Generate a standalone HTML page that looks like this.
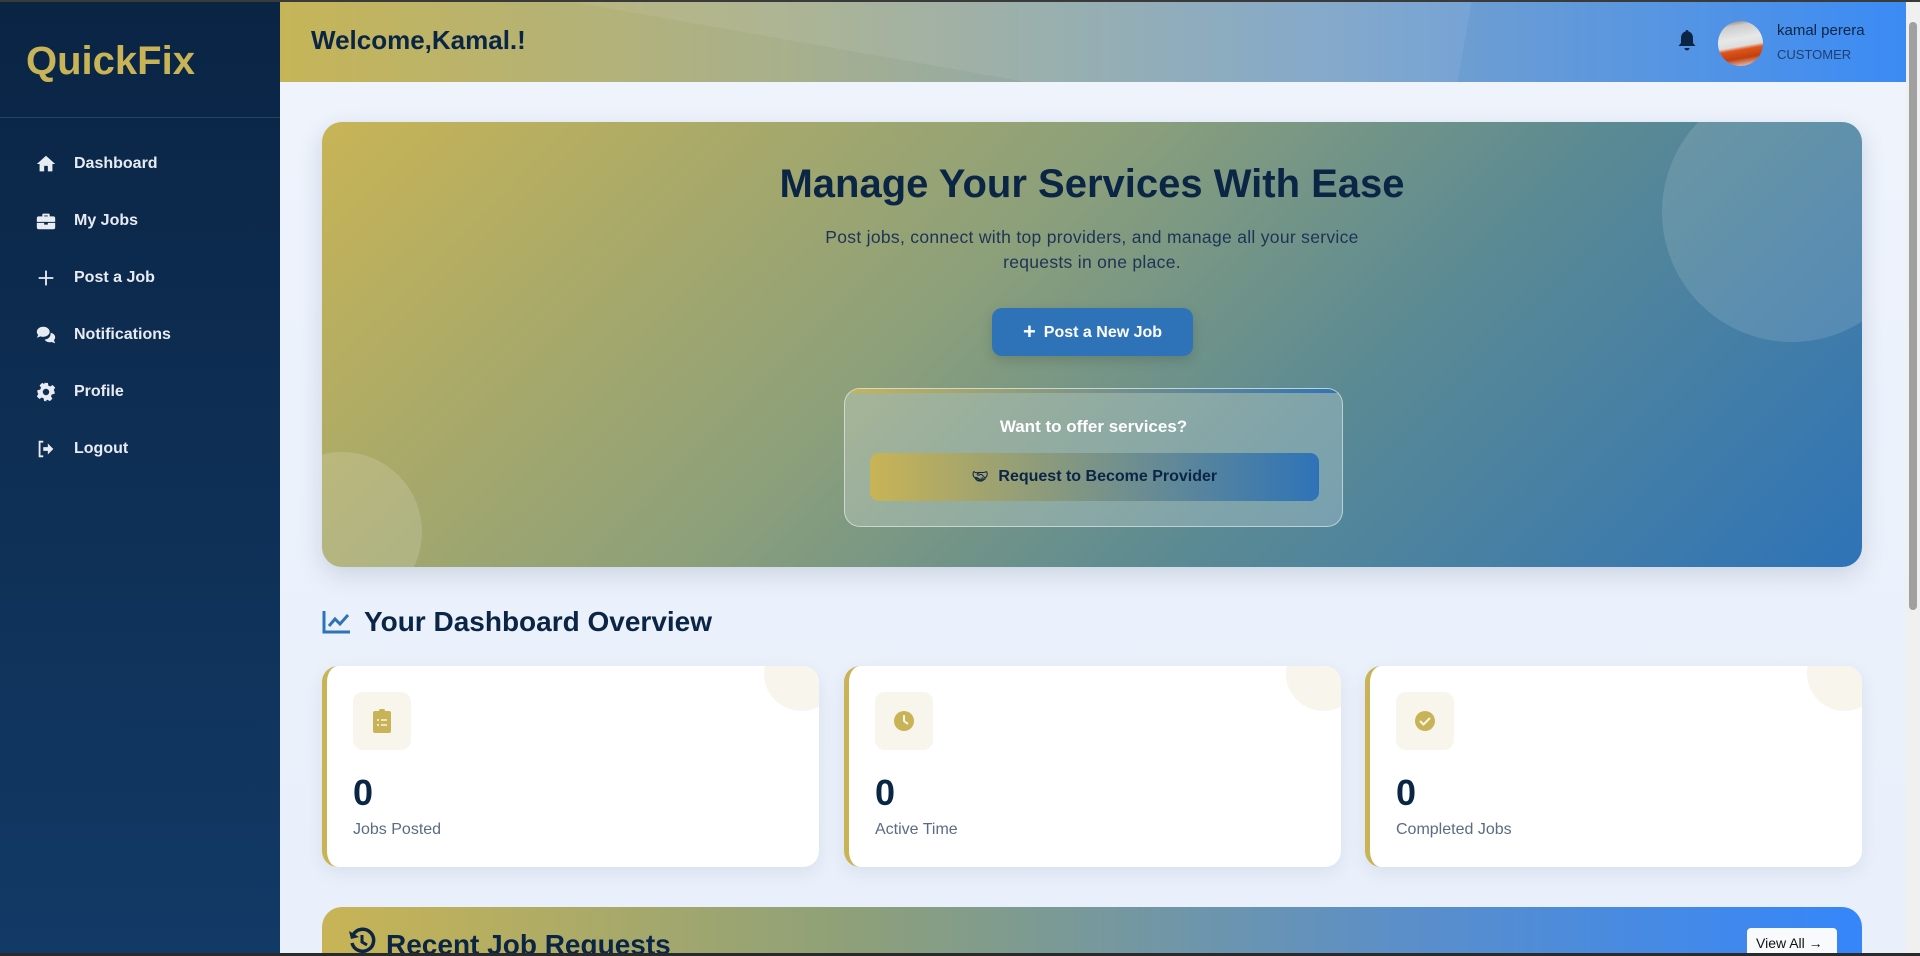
<!DOCTYPE html>
<html style="overflow:hidden;width:1920px;height:956px"><head><meta charset="utf-8"><style>
*{box-sizing:border-box;margin:0;padding:0}
body{width:1920px;height:956px;overflow:hidden;font-family:"Liberation Sans",sans-serif;background:#edf3fc;position:relative}
.topline{position:absolute;left:0;top:0;width:1920px;height:2px;background:#3a3a3a;z-index:9}
.side{position:absolute;left:0;top:0;width:280px;height:956px;background:linear-gradient(180deg,#0a2444,#123a66)}
.logo{position:absolute;left:26px;top:39px;font-size:40px;font-weight:bold;color:#c8b456}
.divider{position:absolute;left:0;top:117px;width:280px;height:1px;background:#24426a}
.nav{position:absolute;left:0;width:280px;height:30px;display:flex;align-items:center;color:#e8ecf2;font-weight:bold;font-size:16px}
.nav svg{position:absolute;left:35px;width:22px;height:22px;fill:#e8ecf2}
.nav span{position:absolute;left:74px}
.header{position:absolute;left:280px;top:0;width:1626px;height:82px;background:linear-gradient(90deg,#c6b558 0%,#a9b08a 30%,#7ba3c8 65%,#3b8bf5 100%);overflow:hidden}
.header:before{content:"";position:absolute;left:300px;top:-250px;width:900px;height:330px;background:rgba(255,255,255,.07);transform:rotate(10deg)}
.welcome{position:absolute;left:31px;top:25px;font-size:26px;font-weight:bold;color:#0b2545}
.main{position:absolute;left:280px;top:82px;width:1626px;height:874px;background:linear-gradient(180deg,#eef3fc,#e9f0fb)}
.scroll{position:absolute;left:1906px;top:0;width:14px;height:956px;background:#f0f0f0}
.scroll div{position:absolute;left:3px;top:22px;width:8px;height:588px;background:#a0a0a0;border-radius:4px}
.hero{position:absolute;left:322px;top:122px;width:1540px;height:445px;border-radius:20px;background:linear-gradient(135deg,#c8b456 0%,#8da07a 40%,#5b8a93 65%,#2e73b8 100%);box-shadow:0 8px 24px rgba(20,40,80,.15);overflow:hidden;text-align:center}
.circ1{position:absolute;right:-60px;top:-40px;width:260px;height:260px;border-radius:50%;background:rgba(255,255,255,.12)}
.circ2{position:absolute;left:-60px;top:330px;width:160px;height:160px;border-radius:50%;background:rgba(255,255,255,.15)}
.hero h1{position:absolute;left:0;right:0;top:40px;font-size:40px;color:#0b2545}
.hero p{position:absolute;left:0;right:0;top:103px;font-size:17.5px;line-height:25px;color:#1f3355;letter-spacing:.3px}
.btn{position:absolute;left:670px;top:186px;width:201px;height:48px;border-radius:10px;background:#2e73b8;color:#fff;font-weight:bold;font-size:16px;line-height:48px;box-shadow:0 4px 12px rgba(0,0,0,.15)}
.pbox{position:absolute;left:522px;top:266px;width:499px;height:139px;border-radius:16px;background:rgba(255,255,255,.22);border:1px solid rgba(255,255,255,.5);overflow:hidden}
.pbox:before{content:"";position:absolute;left:0;top:0;right:0;height:4px;background:linear-gradient(90deg,#c8b456,#2e73b8)}
.pbox h3{position:absolute;left:0;right:0;top:28px;font-size:17px;color:#fff}
.pbtn{position:absolute;left:25px;top:64px;width:449px;height:48px;border-radius:9px;background:linear-gradient(90deg,#c8b456,#2e73b8);color:#0b2545;font-weight:bold;font-size:16px;line-height:48px}
.ov{position:absolute;left:322px;top:606px;font-size:28px;font-weight:bold;color:#0b2545;display:flex;align-items:center}
.card{position:absolute;top:666px;width:497px;height:201px;background:#fff;border-radius:16px;border-left:5px solid #c8b456;box-shadow:0 6px 18px rgba(20,40,80,.08);overflow:hidden}
.card .deco{position:absolute;right:-20px;top:-30px;width:75px;height:75px;border-radius:50%;background:#f8f5ec}
.card .ib{position:absolute;left:26px;top:26px;width:58px;height:58px;border-radius:10px;background:#f8f5ec;display:flex;align-items:center;justify-content:center}
.card .n{position:absolute;left:26px;top:106px;font-size:36px;font-weight:bold;color:#0b2545}
.card .l{position:absolute;left:26px;top:155px;font-size:16px;color:#5b6b85}
.recent{position:absolute;left:322px;top:907px;width:1540px;height:46px;border-radius:20px 20px 0 0;background:linear-gradient(90deg,#c8b456,#8da07a 35%,#5b8fc8 70%,#3586fb);overflow:hidden}
.recent h2{position:absolute;left:64px;top:22px;font-size:28px;color:#0b2545}
.va{position:absolute;left:1425px;top:21px;width:90px;height:30px;background:#f8fafc;border-radius:4px;font-size:14px;color:#111;line-height:30px;padding-left:9px}
.bottomline{position:absolute;left:0;top:953px;width:1920px;height:3px;background:#2a2a2a}
</style></head><body>
<div class="topline"></div>
<div class="side">
<div class="logo">QuickFix</div>
<div class="divider"></div>
<div class="nav" style="top:149px"><svg viewBox="0 0 24 24"><path d="M12 3L2 12h3v8h5v-6h4v6h5v-8h3z"/></svg><span>Dashboard</span></div>
<div class="nav" style="top:206px"><svg viewBox="0 0 24 24"><path d="M9 4h6a1 1 0 0 1 1 1v2h4a2 2 0 0 1 2 2v4H2V9a2 2 0 0 1 2-2h4V5a1 1 0 0 1 1-1zm1 2v1h4V6zM2 14h8v2h4v-2h8v5a2 2 0 0 1-2 2H4a2 2 0 0 1-2-2z"/></svg><span>My Jobs</span></div>
<div class="nav" style="top:263px"><svg viewBox="0 0 24 24"><path d="M11 4h2v7h7v2h-7v7h-2v-7H4v-2h7z"/></svg><span>Post a Job</span></div>
<div class="nav" style="top:320px"><svg viewBox="0 0 24 24"><path d="M9 3c4 0 7 2.5 7 5.5S13 14 9 14c-1 0-2-.2-3-.5L2 15l1.5-3C2.5 11 2 9.8 2 8.5 2 5.5 5 3 9 3zm8 6.5c3 .5 5 2.6 5 5 0 1.200-.5 2.300-1.400 3.100L22 21l-4-1.400c-.6.2-1.300.3-2 .3-2.500 0-4.600-1.200-5.500-3 4.400-.2 7-3.500 6.500-7.400z"/></svg><span>Notifications</span></div>
<div class="nav" style="top:377px"><svg viewBox="0 0 24 24"><path d="M10 2h4l.6 3 2 1 2.6-1.6 2.8 2.8L20.4 9.8l1 2V14l-3 .6-1 2 1.6 2.6-2.8 2.8-2.6-1.6-2 1L14 22h-4l-.6-3-2-1-2.6 1.6-2.8-2.8L3.6 14.2l-1-2V10l3-.6 1-2L5 4.8 7.8 2l2.6 1.6zM12 8.5a3.5 3.5 0 1 0 0 7 3.5 3.5 0 0 0 0-7z"/></svg><span>Profile</span></div>
<div class="nav" style="top:434px"><svg viewBox="0 0 24 24"><path d="M4 3h5v2H6v14h3v2H4zm10 3l6 6-6 6v-4H9v-4h5z"/></svg><span>Logout</span></div>
</div>
<div class="header">
<div class="welcome">Welcome,Kamal.!</div>
<svg style="position:absolute;left:1397px;top:29px" width="20" height="24" viewBox="0 0 20 24"><path d="M10 1c1 0 1.5.7 1.5 1.5 3 .8 4.5 3.3 4.5 6.5v5l2.5 3H1.5L4 14V9c0-3.2 1.5-5.7 4.5-6.5C8.5 1.7 9 1 10 1zM7.5 19h5a2.5 2.5 0 0 1-5 0z" fill="#0b2545"/></svg>
<div style="position:absolute;left:1438px;top:21px;width:45px;height:45px;border-radius:50%;overflow:hidden;background:linear-gradient(170deg,#666 0%,#ccc 15%,#e8e8e8 40%,#ddd 55%,#e0541a 62%,#c0400f 78%,#eee 100%)"></div>
<div style="position:absolute;left:1497px;top:22px;font-size:15px;color:#0b2545">kamal perera</div>
<div style="position:absolute;left:1497px;top:47px;font-size:13px;color:#1f3f6e">CUSTOMER</div>
</div>
<div class="main"></div>
<div class="hero">
<div class="circ1"></div><div class="circ2"></div>
<h1>Manage Your Services With Ease</h1>
<p>Post jobs, connect with top providers, and manage all your service<br>requests in one place.</p>
<div class="btn"><span style="font-size:22px;vertical-align:-2px;margin-right:8px">+</span>Post a New Job</div>
<div class="pbox"><h3>Want to offer services?</h3><div class="pbtn"><span style="margin-right:10px;font-size:13px">&#x1F91D;&#xFE0E;</span>Request to Become Provider</div></div>
</div>
<div class="ov"><svg width="30" height="26" viewBox="0 0 30 26" style="margin-right:12px"><path d="M2 2v21h26" stroke="#2e73b8" stroke-width="3" fill="none"/><path d="M7 17l6-7 5 5 8-9" stroke="#2e73b8" stroke-width="3" fill="none"/></svg>Your Dashboard Overview</div>
<div class="card" style="left:322px"><div class="deco"></div><div class="ib"><svg width="18" height="24" viewBox="0 0 18 24"><path d="M6 2a3 3 0 0 1 6 0h4a2 2 0 0 1 2 2v18a2 2 0 0 1-2 2H2a2 2 0 0 1-2-2V4a2 2 0 0 1 2-2z" fill="#c8b456"/><path d="M4 11h2M8 11h6M4 16h2M8 16h6" stroke="#f8f5ec" stroke-width="1.6"/></svg></div><div class="n">0</div><div class="l">Jobs Posted</div></div>
<div class="card" style="left:844px"><div class="deco"></div><div class="ib"><svg width="22" height="22" viewBox="0 0 22 22"><circle cx="11" cy="11" r="10" fill="#c8b456"/><path d="M11 5v6l4 3" stroke="#f8f5ec" stroke-width="2" fill="none"/></svg></div><div class="n">0</div><div class="l">Active Time</div></div>
<div class="card" style="left:1365px"><div class="deco"></div><div class="ib"><svg width="22" height="22" viewBox="0 0 22 22"><circle cx="11" cy="11" r="10" fill="#c8b456"/><path d="M6 11l3.5 3.5L16 8" stroke="#f8f5ec" stroke-width="2" fill="none"/></svg></div><div class="n">0</div><div class="l">Completed Jobs</div></div>
<div class="recent"><svg style="position:absolute;left:26px;top:20px" width="28" height="28" viewBox="0 0 28 28"><path d="M5 8a11 11 0 1 1-1 8" stroke="#0b2545" stroke-width="3.5" fill="none"/><path d="M1 4l2 8 8-2z" fill="#0b2545"/><path d="M14 8v7l5 3" stroke="#0b2545" stroke-width="3" fill="none"/></svg><h2>Recent Job Requests</h2><div class="va">View All &#x2192;</div></div>
<div class="scroll"><div></div></div>
<div class="bottomline"></div>
</body></html>
